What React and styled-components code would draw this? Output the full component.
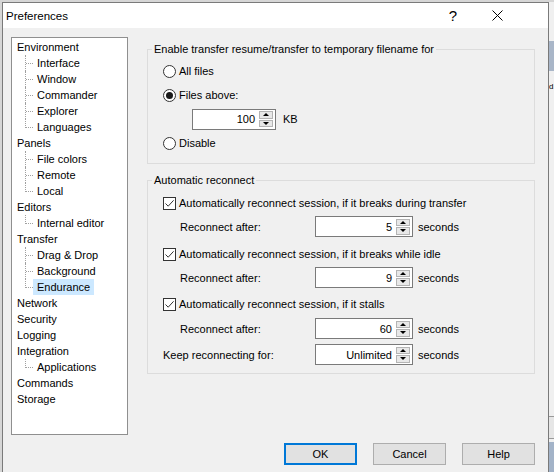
import React from 'react';
import styled, { createGlobalStyle, css } from 'styled-components';

const GlobalStyle = createGlobalStyle`
  html, body { margin: 0; padding: 0; }
  body {
    background: #d6d6d6;
    font-family: "Liberation Sans", Arial, sans-serif;
    font-size: 11px;
    color: #000;
    width: 554px;
    height: 472px;
    overflow: hidden;
  }
  * { box-sizing: border-box; }
`;

const Page = styled.div`
  display: flex;
  height: 472px;
  padding: 2px 0 0 2px;
`;

const Dialog = styled.div`
  width: 547px;
  height: 470px;
  display: flex;
  flex-direction: column;
  background: #f0f0f0;
  border: 1px solid #7a7a7a;
  border-bottom: none;
`;

const TitleBar = styled.div`
  height: 25px;
  flex: none;
  display: flex;
  align-items: center;
  background: #fff;
  padding-left: 3px;
`;

const Title = styled.span`
  font-size: 11.5px;
  color: #000;
`;

const TitleButton = styled.div`
  width: 44px;
  height: 25px;
  display: flex;
  align-items: center;
  justify-content: center;
  font-size: 15px;
  color: #000;
  ${(p) => p.$first && css`margin-left: auto;`}
  ${(p) => p.$last && css`margin-right: 29px;`}
`;

const Body = styled.div`
  flex: 1;
  display: flex;
  flex-direction: column;
  padding: 9px 13px 0 8px;
`;

const Main = styled.div`
  display: flex;
  gap: 19px;
`;

const Tree = styled.div`
  width: 117px;
  height: 398px;
  flex: none;
  background: #fff;
  border: 1px solid #8f8f8f;
  padding: 1px 0 0 1px;
  display: flex;
  flex-direction: column;
`;

const TreeRow = styled.div`
  height: 16px;
  display: flex;
  align-items: stretch;
`;

const Connector = styled.span`
  position: relative;
  width: 20px;
  flex: none;
  &::before {
    content: '';
    position: absolute;
    left: 12px;
    top: 0;
    height: ${(p) => (p.$last ? '9px' : '16px')};
    border-left: 1px dotted #a0a0a0;
  }
  &::after {
    content: '';
    position: absolute;
    left: 13px;
    top: 8px;
    width: 7px;
    border-top: 1px dotted #a0a0a0;
  }
`;

const TreeLabel = styled.span`
  display: flex;
  align-items: center;
  padding: 0 4px;
  white-space: nowrap;
  background: ${(p) => (p.$selected ? '#cce8ff' : 'transparent')};
`;

const Content = styled.div`
  width: 389px;
  display: flex;
  flex-direction: column;
`;

const Group = styled.fieldset`
  margin: ${(p) => p.$top}px 0 0 0;
  padding: 0;
  border: 1px solid #dcdcdc;
  min-width: 0;
`;

const Legend = styled.legend`
  margin-left: 4px;
  padding: 0 2px;
  line-height: 16px;
  height: 16px;
`;

const GroupInner = styled.div`
  display: flex;
  flex-direction: column;
  padding: ${(p) => p.$pt}px 0 8px 15px;
`;

const RadioRow = styled.label`
  height: 24px;
  display: flex;
  align-items: center;
  gap: 3px;
`;

const RadioCircle = styled.span`
  width: 13px;
  height: 13px;
  border-radius: 50%;
  border: 1px solid #333;
  background: #fff;
  display: flex;
  align-items: center;
  justify-content: center;
  &::after {
    content: '';
    width: 7px;
    height: 7px;
    border-radius: 50%;
    background: ${(p) => (p.$checked ? '#1a1a1a' : 'transparent')};
  }
`;

const InlineRow = styled.div`
  height: 24px;
  display: flex;
  align-items: center;
  gap: 7px;
  padding-left: 29px;
`;

const CheckRow = styled.label`
  height: 16px;
  display: flex;
  align-items: center;
  gap: 3px;
  margin-top: ${(p) => p.$mt || 0}px;
  white-space: nowrap;
`;

const CheckBox = styled.span`
  width: 13px;
  height: 13px;
  border: 1px solid #333;
  background: #fff;
  display: flex;
  align-items: center;
  justify-content: center;
`;

const SettingRow = styled.div`
  display: grid;
  grid-template-columns: 147px 98px auto;
  align-items: center;
  column-gap: 5px;
  height: 21px;
  margin-top: ${(p) => p.$mt || 0}px;
`;

const SettingLabel = styled.span`
  padding-left: ${(p) => p.$indent || 0}px;
  white-space: nowrap;
`;

const Edit = styled.div`
  width: ${(p) => p.$w}px;
  height: 21px;
  border: 1px solid #7a7a7a;
  background: #fff;
  display: flex;
  align-items: center;
  justify-content: flex-end;
  padding-right: 2px;
`;

const EditValue = styled.span`
  margin-right: 4px;
`;

const Spinner = styled.div`
  width: 14px;
  height: 16px;
  display: flex;
  flex-direction: column;
  gap: 1px;
`;

const SpinButton = styled.div`
  flex: 1;
  background: #e8e8e8;
  border: 1px solid #b4b4b4;
  display: flex;
  align-items: center;
  justify-content: center;
  &::after {
    content: '';
    width: 0;
    height: 0;
    border-left: 3px solid transparent;
    border-right: 3px solid transparent;
    ${(p) =>
      p.$down
        ? css`border-top: 3px solid #000;`
        : css`border-bottom: 3px solid #000;`}
  }
`;

const Footer = styled.div`
  margin-top: 8px;
  display: flex;
  justify-content: flex-end;
  gap: 16px;
`;

const Button = styled.button`
  width: 73px;
  height: 22px;
  font: inherit;
  color: #000;
  background: #e1e1e1;
  border: ${(p) => (p.$default ? '2px solid #0078d7' : '1px solid #adadad')};
  padding: 0;
`;

const Backdrop = styled.div`
  flex: 1;
  height: 470px;
  display: flex;
  flex-direction: column;
  background: #f0f0f0;
  overflow: hidden;
`;

const BackBand = styled.div`
  height: ${(p) => (p.$h ? `${p.$h}px` : 'auto')};
  flex: ${(p) => (p.$grow ? 1 : 'none')};
  background: ${(p) => p.$bg || 'transparent'};
  border-top: ${(p) => (p.$line ? '1px solid #9a9a9a' : 'none')};
  color: ${(p) => p.$color || '#000'};
  line-height: 14px;
  font-size: 8px;
  white-space: nowrap;
`;

const tree = [
  { label: 'Environment', children: ['Interface', 'Window', 'Commander', 'Explorer', 'Languages'] },
  { label: 'Panels', children: ['File colors', 'Remote', 'Local'] },
  { label: 'Editors', children: ['Internal editor'] },
  { label: 'Transfer', children: ['Drag & Drop', 'Background', 'Endurance'] },
  { label: 'Network' },
  { label: 'Security' },
  { label: 'Logging' },
  { label: 'Integration', children: ['Applications'] },
  { label: 'Commands' },
  { label: 'Storage' },
];

function SpinEdit({ value, width }) {
  return (
    <Edit $w={width}>
      <EditValue>{value}</EditValue>
      <Spinner>
        <SpinButton />
        <SpinButton $down />
      </Spinner>
    </Edit>
  );
}

function Check({ label, mt }) {
  return (
    <CheckRow $mt={mt}>
      <CheckBox>
        <svg width="11" height="11" viewBox="0 0 11 11">
          <path d="M1.5 5.5 L4.2 8.2 L9.6 2.3" fill="none" stroke="#333" strokeWidth="1" />
        </svg>
      </CheckBox>
      {label}
    </CheckRow>
  );
}

export default function App() {
  return (
    <>
      <GlobalStyle />
      <Page>
        <Dialog>
          <TitleBar>
            <Title>Preferences</Title>
            <TitleButton $first>?</TitleButton>
            <TitleButton $last>
              <svg width="11" height="11" viewBox="0 0 11 11">
                <path d="M0.5 0.5 L10.5 10.5 M10.5 0.5 L0.5 10.5" stroke="#000" strokeWidth="1" />
              </svg>
            </TitleButton>
          </TitleBar>
          <Body>
            <Main>
              <Tree>
                {tree.map((node) => (
                  <React.Fragment key={node.label}>
                    <TreeRow>
                      <TreeLabel>{node.label}</TreeLabel>
                    </TreeRow>
                    {(node.children || []).map((c, i, arr) => (
                      <TreeRow key={c}>
                        <Connector $last={i === arr.length - 1} />
                        <TreeLabel $selected={c === 'Endurance'}>{c}</TreeLabel>
                      </TreeRow>
                    ))}
                  </React.Fragment>
                ))}
              </Tree>
              <Content>
                <Group $top={4}>
                  <Legend>Enable transfer resume/transfer to temporary filename for</Legend>
                  <GroupInner $pt={2}>
                    <RadioRow>
                      <RadioCircle />
                      All files
                    </RadioRow>
                    <RadioRow>
                      <RadioCircle $checked />
                      Files above:
                    </RadioRow>
                    <InlineRow>
                      <SpinEdit value="100" width={84} />
                      KB
                    </InlineRow>
                    <RadioRow>
                      <RadioCircle />
                      Disable
                    </RadioRow>
                  </GroupInner>
                </Group>
                <Group $top={8}>
                  <Legend>Automatic reconnect</Legend>
                  <GroupInner $pt={7}>
                    <Check label="Automatically reconnect session, if it breaks during transfer" />
                    <SettingRow $mt={5}>
                      <SettingLabel $indent={17}>Reconnect after:</SettingLabel>
                      <SpinEdit value="5" width={98} />
                      <span>seconds</span>
                    </SettingRow>
                    <Check label="Automatically reconnect session, if it breaks while idle" mt={9} />
                    <SettingRow $mt={5}>
                      <SettingLabel $indent={17}>Reconnect after:</SettingLabel>
                      <SpinEdit value="9" width={98} />
                      <span>seconds</span>
                    </SettingRow>
                    <Check label="Automatically reconnect session, if it stalls" mt={8} />
                    <SettingRow $mt={6}>
                      <SettingLabel $indent={17}>Reconnect after:</SettingLabel>
                      <SpinEdit value="60" width={98} />
                      <span>seconds</span>
                    </SettingRow>
                    <SettingRow $mt={5}>
                      <SettingLabel>Keep reconnecting for:</SettingLabel>
                      <SpinEdit value="Unlimited" width={98} />
                      <span>seconds</span>
                    </SettingRow>
                  </GroupInner>
                </Group>
              </Content>
            </Main>
            <Footer>
              <Button $default>OK</Button>
              <Button>Cancel</Button>
              <Button>Help</Button>
            </Footer>
          </Body>
        </Dialog>
        <Backdrop>
          <BackBand $h={39} />
          <BackBand $h={30} $bg="#a9b6c8" />
          <BackBand $h={9} />
          <BackBand $h={14}>d</BackBand>
          <BackBand $grow />
          <BackBand $h={22} $line $bg="#e6e6e6" />
          <BackBand $h={4} $line />
          <BackBand $h={30} $bg="#a3b3c8" />
        </Backdrop>
      </Page>
    </>
  );
}
